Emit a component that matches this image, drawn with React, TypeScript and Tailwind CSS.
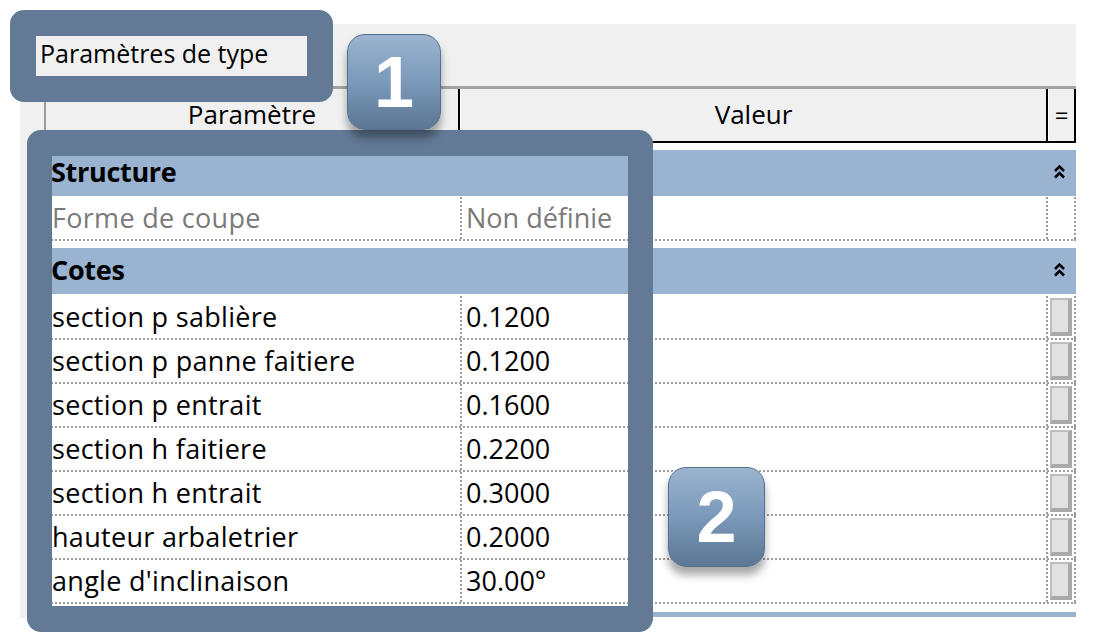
import React from "react";

type Row = { name: string; value: string };

const cotes: Row[] = [
  { name: "section p sablière", value: "0.1200" },
  { name: "section p panne faitiere", value: "0.1200" },
  { name: "section p entrait", value: "0.1600" },
  { name: "section h faitiere", value: "0.2200" },
  { name: "section h entrait", value: "0.3000" },
  { name: "hauteur arbaletrier", value: "0.2000" },
  { name: "angle d'inclinaison", value: "30.00°" },
];

const font = { fontFamily: '"Open Sans", "Noto Sans", sans-serif' };

function Chevrons() {
  return (
    <svg width="13" height="20" viewBox="0 0 13 20">
      <path d="M2 9 L6.5 4.5 L11 9" fill="none" stroke="#000" strokeWidth="2.6" />
      <path d="M2 15.5 L6.5 11 L11 15.5" fill="none" stroke="#000" strokeWidth="2.6" />
    </svg>
  );
}

function GroupHeader({ label }: { label: string }) {
  return (
    <div className="flex h-[46px] items-center bg-[#99b3d0]">
      <div className="flex-1 pb-[4px] pl-[7px] text-[27px] font-bold leading-none tracking-[-0.3px] text-black">
        {label}
      </div>
      <div className="flex w-[30px] items-center justify-center pb-[3px] pr-[4px]">
        <Chevrons />
      </div>
    </div>
  );
}

function DataRow({
  row,
  muted = false,
  button = true,
}: {
  row: Row;
  muted?: boolean;
  button?: boolean;
}) {
  const color = muted ? "text-[#7a7a7a]" : "text-black";
  return (
    <div className="flex h-[44px] border-b-2 border-dotted border-[#9c9c9c]">
      <div className={`flex w-[416px] items-center pb-[2px] pl-[8px] text-[27px] leading-none tracking-[0.3px] ${color}`}>
        {row.name}
      </div>
      <div
        className={`flex flex-1 items-center border-l-2 border-dotted border-[#9c9c9c] pb-[2px] pl-[4px] text-[27px] leading-none ${color}`}
      >
        {row.value}
      </div>
      <div className="flex w-[30px] items-stretch border-x-2 border-dotted border-[#9c9c9c] py-[2px] pl-[2px]">
        {button && (
          <div className="w-[22px] border-b-4 border-l-2 border-r-4 border-t-2 border-b-[#a9a9a9] border-l-[#bdbdbd] border-r-[#a9a9a9] border-t-[#bdbdbd] bg-[#e1e1e1]" />
        )}
      </div>
    </div>
  );
}

function Badge({ n, className }: { n: string; className: string }) {
  return (
    <div
      className={`absolute flex items-center justify-center rounded-[18px] border border-[#55708e] bg-gradient-to-b from-[#9bb4cf] via-[#7b99ba] to-[#5c7693] shadow-[0_8px_8px_rgba(0,0,0,0.35)] ${className}`}
    >
      <span
        className="text-[72px] font-bold leading-none text-white"
        style={{ fontFamily: '"Liberation Sans", Arial, sans-serif' }}
      >
        {n}
      </span>
    </div>
  );
}

export default function App() {
  return (
    <div className="relative h-[644px] w-[1112px] overflow-hidden bg-white" style={font}>
      <div className="pl-[20px] pt-[24px]">
        <div className="flex h-[594px] w-[1056px] flex-col bg-[#f0f0f0]">
          {/* type selector */}
          <div className="h-[62px] pl-[15px] pt-[11px]">
            <div className="flex h-[42px] w-[274px] items-center border border-[#efb2a8] bg-[#f0f0f0] pb-[6px] pl-[4px] text-[25px] leading-none text-black">
              Paramètres de type
            </div>
          </div>

          {/* column headers */}
          <div className="ml-[24px] flex h-[57px] w-[1032px] border-b-2 border-t-[3px] border-b-black border-t-[#a3a3a3]">
            <div className="flex w-[414px] items-center justify-center border-l-2 border-[#9a9a9a] pb-[2px] text-[26px] leading-none">
              Paramètre
            </div>
            <div className="w-[2px] bg-black" />
            <div className="flex flex-1 items-center justify-center border-l border-white pb-[2px] text-[26px] leading-none">
              Valeur
            </div>
            <div className="w-[2px] bg-black" />
            <div className="flex w-[26px] items-center justify-center border-l border-white text-[24px] leading-none">
              =
            </div>
            <div className="w-[2px] bg-black" />
          </div>

          {/* property rows */}
          <div className="ml-[24px] flex w-[1032px] flex-1 flex-col bg-white pt-[7px]">
            <GroupHeader label="Structure" />
            <div className="mt-[1px]">
              <DataRow row={{ name: "Forme de coupe", value: "Non définie" }} muted button={false} />
            </div>
            <div className="mt-[7px]">
              <GroupHeader label="Cotes" />
            </div>
            <div className="mt-[2px]">
              {cotes.map((r) => (
                <DataRow key={r.name} row={r} />
              ))}
            </div>
            <div className="mt-[8px] h-[5px] bg-[#99b3d0]" />
          </div>
        </div>
      </div>

      {/* annotation frames */}
      <div className="pointer-events-none absolute left-[10px] top-[10px] h-[92px] w-[323px] rounded-[14px] border-[26px] border-[#627a96]" />
      <div className="pointer-events-none absolute left-[27px] top-[130px] h-[502px] w-[626px] rounded-[14px] border-[25px] border-t-[26px] border-b-[26px] border-[#627a96]" />

      <Badge n="1" className="left-[347px] top-[34px] h-[96px] w-[94px]" />
      <Badge n="2" className="left-[668px] top-[467px] h-[100px] w-[97px]" />
    </div>
  );
}
